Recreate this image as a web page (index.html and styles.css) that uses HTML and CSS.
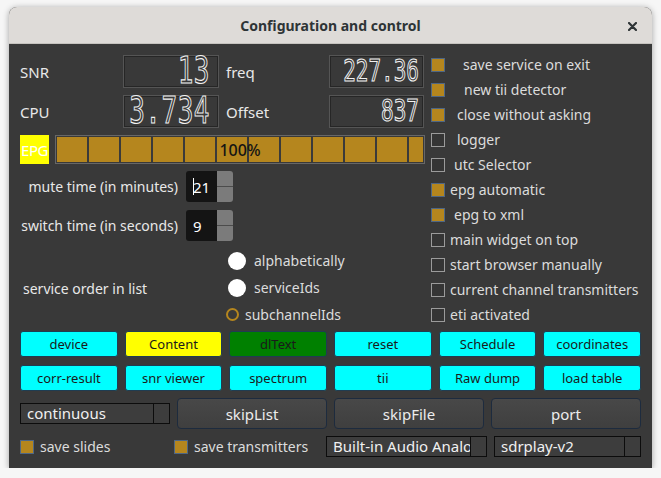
FILE: index.html
```html
<!DOCTYPE html>
<html>
<head>
<meta charset="utf-8">
<title>Configuration and control</title>
<link rel="stylesheet" href="styles.css">
</head>
<body>
<div class="window">
  <header class="titlebar">
    <span class="title">Configuration and control</span>
    <svg class="close" width="9" height="9" viewBox="0 0 9 9"><path d="M1 1L8 8M8 1L1 8" stroke="#2e3436" stroke-width="2.2" stroke-linecap="round"/></svg>
  </header>
  <main class="content">
    <section class="top">
      <div class="left">
        <div class="lcd-grid">
          <span class="lbl">SNR</span>
          <div class="lcd"><span>13</span></div>
          <span class="lbl second">freq</span>
          <div class="lcd small"><span>227.36</span></div>
          <span class="lbl">CPU</span>
          <div class="lcd"><span>3.734</span></div>
          <span class="lbl second">Offset</span>
          <div class="lcd small"><span>837</span></div>
        </div>
        <div class="epg-row">
          <span class="epg">EPG</span>
          <div class="progress"><div class="fill"><span>100%</span></div></div>
        </div>
        <div class="spin-row first">
          <span class="spin-label">mute time (in minutes)</span>
          <div class="spin"><div class="field"><i class="caret"></i>21</div><div class="arrows"><span></span><span></span></div></div>
        </div>
        <div class="spin-row">
          <span class="spin-label">switch time (in seconds)</span>
          <div class="spin"><div class="field">9</div><div class="arrows"><span></span><span></span></div></div>
        </div>
        <div class="order">
          <span class="order-label">service order in list</span>
          <div class="radios">
            <div class="radio-row"><span class="radio"></span>alphabetically</div>
            <div class="radio-row"><span class="radio"></span>serviceIds</div>
            <div class="radio-row sub"><span class="radio ring"></span>subchannelIds</div>
          </div>
        </div>
      </div>
      <div class="right">
        <div class="check-row"><span class="box on"></span><span class="g19">save service on exit</span></div>
        <div class="check-row"><span class="box on"></span><span class="g20">new tii detector</span></div>
        <div class="check-row"><span class="box on"></span><span class="g13">close without asking</span></div>
        <div class="check-row"><span class="box"></span><span class="g13">logger</span></div>
        <div class="check-row"><span class="box"></span><span class="g10">utc Selector</span></div>
        <div class="check-row"><span class="box on"></span><span class="g6">epg automatic</span></div>
        <div class="check-row"><span class="box on"></span><span class="g10">epg to xml</span></div>
        <div class="check-row"><span class="box"></span><span class="g6">main widget on top</span></div>
        <div class="check-row"><span class="box"></span><span class="g6">start browser manually</span></div>
        <div class="check-row"><span class="box"></span><span class="g6">current channel transmitters</span></div>
        <div class="check-row"><span class="box"></span><span class="g6">eti activated</span></div>
      </div>
    </section>
    <section class="btns">
      <div class="b">device</div>
      <div class="b yellow">Content</div>
      <div class="b green">dlText</div>
      <div class="b">reset</div>
      <div class="b">Schedule</div>
      <div class="b">coordinates</div>
      <div class="b">corr-result</div>
      <div class="b">snr viewer</div>
      <div class="b">spectrum</div>
      <div class="b">tii</div>
      <div class="b">Raw dump</div>
      <div class="b">load table</div>
    </section>
    <section class="row3">
      <div class="combo"><span class="txt">continuous</span><span class="drop"></span></div>
      <div class="big">skipList</div>
      <div class="big">skipFile</div>
      <div class="big">port</div>
    </section>
    <section class="row4">
      <div class="item"><span class="box on"></span>save slides</div>
      <div class="item"><span class="box on"></span>save transmitters</div>
      <div class="combo"><span class="txt">Built-in Audio Analog</span><span class="drop"></span></div>
      <div class="combo last"><span class="txt">sdrplay-v2</span><span class="drop"></span></div>
    </section>
  </main>
</div>
</body>
</html>
```

FILE: styles.css
```css
* { box-sizing: border-box; margin: 0; padding: 0; }
html, body { background: #f6f6f6; }
body { padding: 7px 0 0 9px; font-family: "Noto Sans", sans-serif; }

.window {
  width: 643px; height: 461px; background: #393939;
  border-radius: 8px 8px 0 0; box-shadow: 0 1px 6px rgba(0,0,0,.35);
  overflow: hidden; display: flex; flex-direction: column;
}
.titlebar {
  height: 37px; flex: none; background: #dedbd8; border-bottom: 1px solid #c6c3bf;
  display: flex; align-items: center; justify-content: center; position: relative;
}
.title { font-size: 14px; font-weight: 700; color: #2e3436; }
.close { position: absolute; right: 15px; top: 15px; }

.content { padding: 0 11px 11px 11px; color: #e8e8e8; }

.top { display: flex; height: 285px; }
.left { width: 405px; flex: none; }
.right { margin-left: 6px; padding-top: 8px; flex: 1; }

.lcd-grid {
  display: grid; grid-template-columns: 103px 96px 110px 95px;
  grid-template-rows: 33px 33px; row-gap: 7px; margin-top: 11px; align-items: center;
}
.lbl { font-size: 15px; }
.lbl.second { padding-left: 7px; }
.lcd {
  height: 33px; border: 1px solid #555; box-shadow: inset 0 0 0 1px #262626;
  display: flex; align-items: center; justify-content: flex-end; padding-right: 8px;
}
.lcd span {
  display: inline-block; font-family: "DejaVu Sans Mono", monospace; font-size: 26px;
  line-height: 0.8; color: #393939; -webkit-text-stroke: 0.8px #f2f2f2; transform: scaleY(1.4);
  letter-spacing: 0.5px;
}
.lcd.small { padding-right: 4px; }
.lcd.small span { font-size: 21px; transform: scaleY(1.45); letter-spacing: 0; }

.epg-row { display: flex; gap: 6px; margin-top: 7px; height: 29px; }
.epg {
  width: 29px; background: #ffff00; color: #fff; font-size: 15px; letter-spacing: -0.5px;
  display: flex; align-items: center; justify-content: center;
}
.progress { width: 370px; border: 1px solid #676767; padding: 1px; }
.progress .fill {
  height: 100%;
  background: repeating-linear-gradient(to right, #b5861e 0 30px, #3a3a3a 30px 32px);
  display: flex; align-items: center; justify-content: center;
  font-size: 16px; font-weight: 500; color: #141414;
}

.spin-row { display: flex; align-items: center; height: 31px; margin-top: 8px; }
.spin-row.first { margin-top: 7px; }
.spin-label { width: 158px; text-align: right; font-size: 14px; margin-right: 8px; white-space: nowrap; }
.spin { display: flex; width: 47px; height: 31px; }
.spin .field {
  width: 31px; background: #141414; border-radius: 3px 0 0 3px;
  font-size: 15px; color: #fff; display: flex; align-items: center; padding-left: 7px;
}
.caret { display: block; width: 1px; height: 17px; background: #fff; margin-right: -1px; }
.spin .arrows {
  width: 16px; display: flex; flex-direction: column; background: #7b7b7b;
  border-radius: 0 3px 3px 0; overflow: hidden;
}
.arrows span { flex: 1; }
.arrows span + span { border-top: 1px solid #4c4c4c; }

.order { display: flex; margin-top: 6px; height: 82px; }
.order-label { width: 205px; padding-left: 3px; font-size: 14px; display: flex; align-items: center; }
.radios { display: flex; flex-direction: column; margin-left: 3px; }
.radio-row { height: 27px; display: flex; align-items: center; gap: 8px; font-size: 14px; color: #dcdcdc; }
.radio { width: 18px; height: 18px; border-radius: 50%; background: #fff; flex: none; }
.radio-row.sub { margin-left: -2px; gap: 6px; }
.radio.ring { width: 13px; height: 13px; background: transparent; border: 2px solid #b5861e; }

.check-row { height: 25px; display: flex; align-items: center; font-size: 14px; color: #dcdcdc; white-space: nowrap; }
.box { width: 14px; height: 14px; border: 1px solid #9b9b9b; background: #353535; flex: none; }
.box.on { background: #b5861e; border-color: #4f6785; }
.g6 { margin-left: 5px; }
.g10 { margin-left: 9px; }
.g13 { margin-left: 12px; }
.g19 { margin-left: 18px; }
.g20 { margin-left: 19px; }

.btns {
  display: grid; grid-template-columns: repeat(6, 1fr); column-gap: 7px; row-gap: 8px;
  grid-auto-rows: 26px; margin-top: 2px;
}
.b {
  background: #00ffff; border: 1px solid #1f3d52; border-radius: 3px;
  font-size: 13px; color: #1a1a1a; display: flex; align-items: center; justify-content: center;
}
.b.yellow { background: #ffff00; }
.b.green { background: #008000; }

.row3 {
  display: grid; grid-template-columns: repeat(4, 1fr); column-gap: 7px;
  margin-top: 7px; height: 31px; align-items: center;
}
.combo { height: 21px; border: 1px solid #0c0c0c; background: #3d3d3d; display: flex; font-size: 15px; color: #f0f0f0; }
.combo .txt { flex: 1; padding-left: 6px; overflow: hidden; white-space: nowrap; line-height: 19px; }
.combo .drop { width: 16px; flex: none; border-left: 1px solid #0c0c0c; }
.big {
  height: 31px; border: 1px solid #1d2b3e; border-radius: 4px;
  background: linear-gradient(#484848, #3f3f3f); font-size: 15px; color: #ececec;
  display: flex; align-items: center; justify-content: center;
}

.row4 {
  display: grid; grid-template-columns: 154px 152px 161px 154px;
  margin-top: 7px; height: 21px; align-items: center;
}
.row4 .item { display: flex; align-items: center; gap: 6px; font-size: 14px; color: #dcdcdc; white-space: nowrap; }
.row4 .combo { height: 21px; }
.combo.last { margin-left: 7px; }
```
